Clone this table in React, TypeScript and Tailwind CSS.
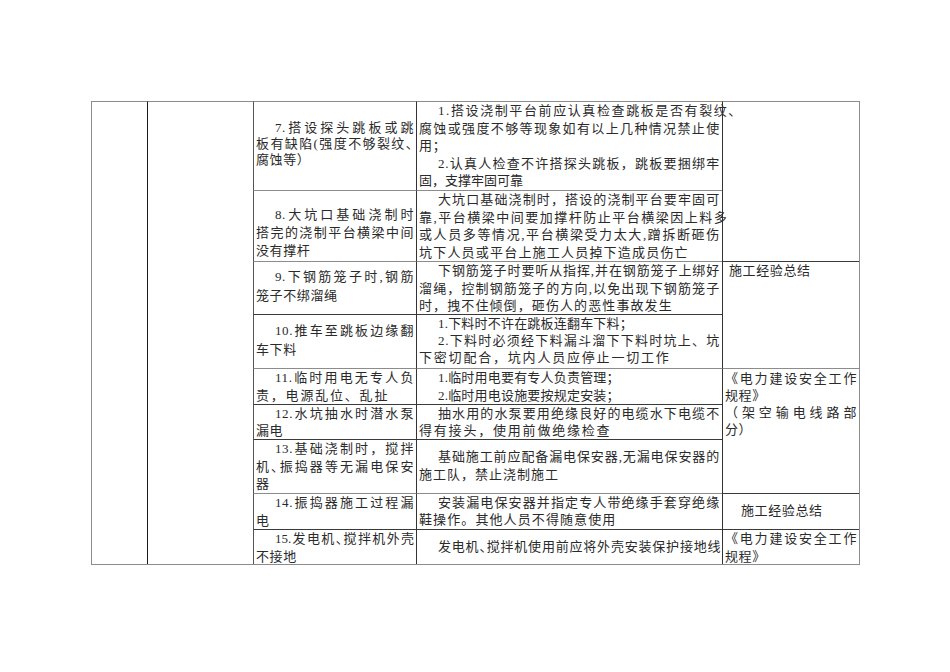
import React from "react";
import clsx from "clsx";

// "^" at the start = first-line indent, "=" at the end = justify the line to the cell width.
// An entry can also be [text, extraClasses] for lines that need their own spacing.
type LineDef = string | [string, string];

function Line({ def }: { def: LineDef }) {
  const raw = typeof def === "string" ? def : def[0];
  const extra = typeof def === "string" ? "" : def[1];
  const indent = raw.startsWith("^");
  const full = raw.endsWith("=");
  const t = raw.replace(/^\^/, "").replace(/=$/, "");
  return (
    <div
      className={clsx(
        "whitespace-nowrap",
        indent && "indent-[19px]",
        full && "text-justify [text-align-last:justify]",
        extra
      )}
    >
      {t}
    </div>
  );
}

interface CellProps {
  lines?: LineDef[];
  className?: string;
}

function Cell({ lines = [], className }: CellProps) {
  return (
    <div className={clsx("border-t border-l px-[2px] overflow-visible", className)}>
      {lines.map((l, i) => (
        <Line key={i} def={l} />
      ))}
    </div>
  );
}

const G = "border-t-[#8c8c8c]";
const D = "border-t-[#3a3a3a]";
const C3 = "border-l-[#555] tracking-[0.6px]";
const C4 = "border-l-[#333] tracking-[0.8px]";
const C5 = "border-l-[#333] tracking-[0.6px]";
const HALT = "[font-feature-settings:'halt']";

export default function App() {
  return (
    <div className="w-[950px] h-[672px] bg-white pl-[91px] pt-[101px] text-[13px] text-[#2a2a2a] font-['Liberation_Serif','Noto_Sans_CJK_SC',serif]">
      <div className="grid w-fit grid-cols-[56px_106px_163px_306px_137px] grid-rows-[89px_71px_53px_54px_36px_35px_54px_36px_35px] border-r border-b border-r-[#8c8c8c] border-b-[#8c8c8c]">
        <Cell className={clsx("row-span-9 border-l-[#8c8c8c]", G)} />
        <Cell className={clsx("row-span-9 border-l-[#1a1a1a]", G)} />

        {/* 7 */}
        <Cell
          className={clsx(C3, G, "pt-[18px] leading-[16px]")}
          lines={["^7.搭设探头跳板或跳=", ["板有缺陷(强度不够裂纹、", "tracking-[1.4px]"], "腐蚀等）"]}
        />
        <Cell
          className={clsx(C4, G, "leading-[17.5px]")}
          lines={[
            ["^1.搭设浇制平台前应认真检查跳板是否有裂纹、", "tracking-[1.6px]"],
            "腐蚀或强度不够等现象如有以上几种情况禁止使=",
            "用；",
            "^2.认真人检查不许搭探头跳板，跳板要捆绑牢=",
            ["固，支撑牢固可靠", "tracking-[0px]"],
          ]}
        />
        <Cell className={clsx(C5, G, "row-span-2")} />

        {/* 8 */}
        <Cell
          className={clsx(C3, G, "pt-[15px] leading-[18px]")}
          lines={["^8.大坑口基础浇制时=", "搭完的浇制平台横梁中间=", "没有撑杆"]}
        />
        <Cell
          className={clsx(C4, G, "leading-[17.5px]")}
          lines={[
            "^大坑口基础浇制时，搭设的浇制平台要牢固可=",
            ["靠,平台横梁中间要加撑杆防止平台横梁因上料多", "tracking-[1.5px]"],
            "或人员多等情况,平台横梁受力太大,蹭拆断砸伤=",
            ["坑下人员或平台上施工人员掉下造成员伤亡", "tracking-[1.2px]"],
          ]}
        />

        {/* 9 */}
        <Cell
          className={clsx(C3, G, "pt-[5px] leading-[19px]")}
          lines={["^9.下钢筋笼子时,钢筋=", "笼子不绑溜绳"]}
        />
        <Cell
          className={clsx(C4, G, "leading-[17.5px]")}
          lines={[
            "^下钢筋笼子时要听从指挥,并在钢筋笼子上绑好=",
            "溜绳，控制钢筋笼子的方向,以免出现下钢筋笼子=",
            ["时，拽不住倾倒，砸伤人的恶性事故发生", "tracking-[1.1px]"],
          ]}
        />
        <Cell className={clsx(C5, D, "row-span-2 pl-[6px] leading-[17.5px]")} lines={["施工经验总结"]} />

        {/* 10 */}
        <Cell
          className={clsx(C3, D, "pt-[6px] leading-[19px]")}
          lines={["^10.推车至跳板边缘翻=", "车下料"]}
        />
        <Cell
          className={clsx(C4, D, "leading-[17px]")}
          lines={[
            ["^1.下料时不许在跳板连翻车下料；", "tracking-[0.2px]"],
            "^2.下料时必须经下料漏斗溜下下料时坑上、坑=",
            ["下密切配合，坑内人员应停止一切工作", "tracking-[1.8px]"],
          ]}
        />

        {/* 11 */}
        <Cell
          className={clsx(C3, G, "leading-[18px]")}
          lines={["^11.临时用电无专人负=", ["责，电源乱位、乱扯", "tracking-[1.8px]"]]}
        />
        <Cell
          className={clsx(C4, G, "leading-[18px]")}
          lines={[
            ["^1.临时用电要有专人负责管理；", "tracking-[0.2px]"],
            ["^2.临时用电设施要按规定安装；", "tracking-[0.2px]"],
          ]}
        />
        <Cell
          className={clsx(C5, G, "row-span-3 pt-[1px] leading-[17px]")}
          lines={["《电力建设安全工作=", "规程》", "（架空输电线路部=", "分）"]}
        />

        {/* 12 */}
        <Cell
          className={clsx(C3, D, "leading-[17px]")}
          lines={["^12.水坑抽水时潜水泵=", "漏电"]}
        />
        <Cell
          className={clsx(C4, D, "leading-[17px]")}
          lines={[
            "^抽水用的水泵要用绝缘良好的电缆水下电缆不=",
            ["得有接头，使用前做绝缘检查", "tracking-[1.8px]"],
          ]}
        />

        {/* 13 */}
        <Cell
          className={clsx(C3, D, "leading-[17.5px]")}
          lines={["^13.基础浇制时，搅拌=", ["机、振捣器等无漏电保安=", HALT], "器"]}
        />
        <Cell
          className={clsx(C4, D, "pt-[8px] leading-[18px]")}
          lines={["^基础施工前应配备漏电保安器,无漏电保安器的=", ["施工队，禁止浇制施工", "tracking-[1px]"]]}
        />

        {/* 14 */}
        <Cell
          className={clsx(C3, G, "leading-[18px]")}
          lines={["^14.振捣器施工过程漏=", "电"]}
        />
        <Cell
          className={clsx(C4, G, "leading-[17px]")}
          lines={[
            "^安装漏电保安器并指定专人带绝缘手套穿绝缘=",
            ["鞋操作。其他人员不得随意使用", "tracking-[1.1px]"],
          ]}
        />
        <Cell className={clsx(C5, D, "pl-[18px] pt-[8px] leading-[18px]")} lines={["施工经验总结"]} />

        {/* 15 */}
        <Cell
          className={clsx(C3, D, "leading-[18px]")}
          lines={[["^15.发电机、搅拌机外壳=", clsx(HALT, "tracking-[0px]")], "不接地"]}
        />
        <Cell
          className={clsx(C4, D, "pt-[8px] leading-[18px]")}
          lines={[["^发电机、搅拌机使用前应将外壳安装保护接地线=", HALT]]}
        />
        <Cell
          className={clsx(C5, D, "leading-[18px]")}
          lines={["《电力建设安全工作=", "规程》"]}
        />
      </div>
    </div>
  );
}
